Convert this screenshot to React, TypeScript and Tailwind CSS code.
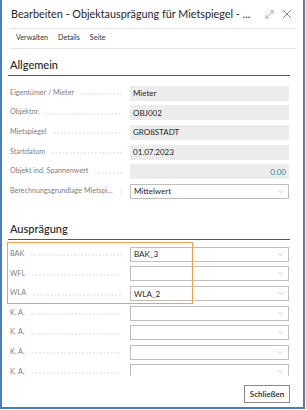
import { ChevronDown } from 'lucide-react';

type Field = { label: string; value?: string; kind: 'readonly' | 'select'; align?: 'right' };

const allgemein: Field[] = [
  { label: 'Eigentümer / Mieter', value: 'Mieter', kind: 'readonly' },
  { label: 'Objektnr.', value: 'OBJ002', kind: 'readonly' },
  { label: 'Mietspiegel', value: 'GROßSTADT', kind: 'readonly' },
  { label: 'Startdatum', value: '01.07.2023', kind: 'readonly' },
  { label: 'Objekt ind. Spannenwert', value: '0.00', kind: 'readonly', align: 'right' },
  { label: 'Berechnungsgrundlage Mietspi...', value: 'Mittelwert', kind: 'select' },
];

const auspraegung: Field[] = [
  { label: 'BAK', value: 'BAK_3', kind: 'select' },
  { label: 'WFL', value: '', kind: 'select' },
  { label: 'WLA', value: 'WLA_2', kind: 'select' },
  { label: 'K. A.', value: '', kind: 'select' },
  { label: 'K. A.', value: '', kind: 'select' },
  { label: 'K. A.', value: '', kind: 'select' },
  { label: 'K. A.', value: '', kind: 'select' },
];

function Row({ f }: { f: Field }) {
  return (
    <div className="flex h-[19.6px] items-center">
      <div className="flex w-[112px] items-center overflow-hidden text-[7.2px] text-[#808080]">
        <span className="shrink-0 whitespace-nowrap">{f.label}</span>
        <span className="ml-[6px] mt-[2px] h-[2px] min-w-[4px] flex-1 bg-[radial-gradient(circle,#cfcfcf_0.5px,transparent_0.8px)] bg-[length:3.6px_2px]" />
      </div>
      <div className="w-[8px]" />
      {f.kind === 'readonly' ? (
        <div
          className={`flex h-[15px] w-[159px] items-center bg-[#ececec] px-[3px] text-[8px] ${
            f.align === 'right' ? 'justify-end text-[#2f8a98]' : 'text-[#262626]'
          }`}
        >
          {f.value}
        </div>
      ) : (
        <div className="flex h-[15px] w-[159px] items-center justify-between border border-[#bdbdbd] bg-white pl-[3px] pr-[3px] text-[8px] text-[#262626]">
          <span>{f.value}</span>
          <ChevronDown size={9} strokeWidth={1.1} className="text-[#8a8a8a]" />
        </div>
      )}
    </div>
  );
}

export default function App() {
  return (
    <div
      className="flex h-[409px] w-[305px] flex-col border-x-2 border-b-2 border-[#4a7dc0] bg-white"
      style={{ fontFamily: 'Lato, "Noto Sans", sans-serif' }}
    >
      {/* title bar */}
      <div className="mx-[8px] flex h-[29px] shrink-0 items-center justify-between border-b border-[#e3e3e3] pl-[1px]">
        <span className="whitespace-nowrap text-[10.8px] text-[#262626]">
          Bearbeiten - Objektausprägung für Mietspiegel - ...
        </span>
        <div className="flex items-center gap-[8px] pr-[3px] text-[#a0a0a0]">
          <svg width="9" height="9" viewBox="0 0 10 10" fill="none" stroke="currentColor" strokeWidth="0.9">
            <path d="M1 9 L9 1 M5.5 1 H9 V4.5 M1 5.5 V9 H4.5" />
          </svg>
          <svg width="10" height="10" viewBox="0 0 11 11" fill="none" stroke="#7a7a7a" strokeWidth="1">
            <path d="M1 1 L10 10 M10 1 L1 10" />
          </svg>
        </div>
      </div>

      {/* action menu */}
      <div className="mx-[8px] flex h-[20px] shrink-0 items-center gap-[10px] border-b border-[#e3e3e3] pl-[6px] text-[7.2px] text-[#333]">
        <span>Verwalten</span>
        <span>Details</span>
        <span>Seite</span>
      </div>

      {/* content */}
      <div className="flex-1 overflow-hidden pl-[6px] pr-[13px]">
        <div className="mt-[8px] border-b border-[#5a5a5a] pb-[1px] pl-[2px] text-[11px] font-medium text-[#262626]">
          Allgemein
        </div>
        <div className="mt-[8px] pl-[2px]">
          {allgemein.map((f, i) => (
            <Row key={i} f={f} />
          ))}
        </div>

        <div className="mt-[20px] border-b border-[#5a5a5a] pb-[1px] pl-[2px] text-[11px] font-medium text-[#262626]">
          Ausprägung
        </div>
        <div className="relative mt-[5px] pl-[2px]">
          <div className="absolute left-[-1px] top-[-3px] h-[62px] w-[186px] border border-[#f0a44a]" />
          {auspraegung.map((f, i) => (
            <Row key={i} f={f} />
          ))}
        </div>
      </div>

      {/* footer */}
      <div className="flex h-[31px] shrink-0 items-start justify-end pr-[13px] pt-[9px]">
        <button className="h-[18px] w-[46px] border border-[#8a8a8a] bg-white text-[8px] font-semibold leading-none text-[#262626]">
          Schließen
        </button>
      </div>
    </div>
  );
}
